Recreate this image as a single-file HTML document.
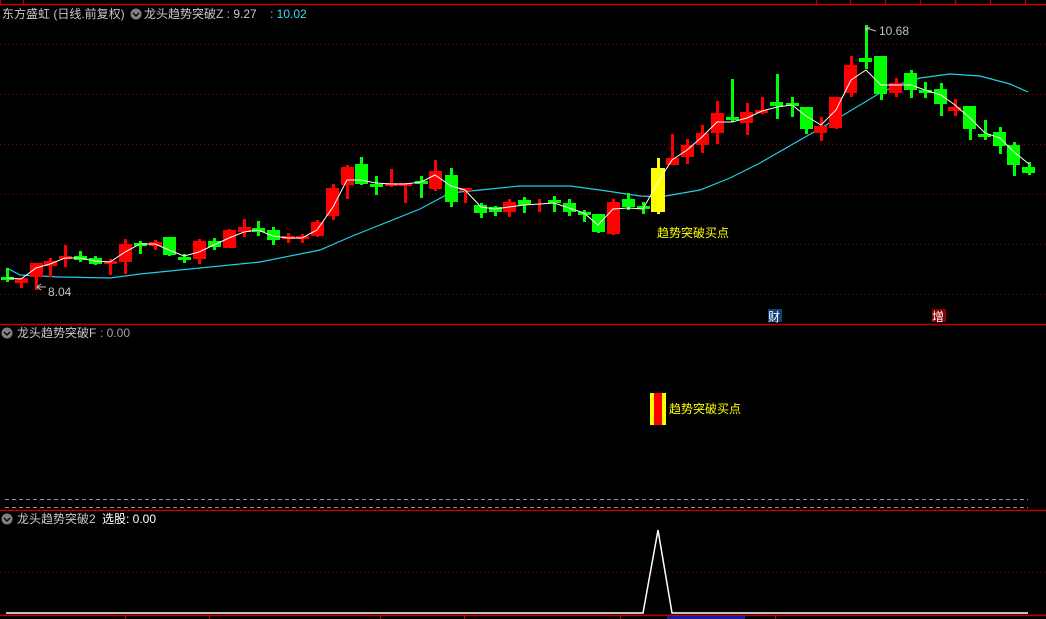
<!DOCTYPE html>
<html><head><meta charset="utf-8"><style>
html,body{margin:0;padding:0;background:#000;width:1046px;height:619px;overflow:hidden}
svg{display:block}
text{font-family:"Liberation Sans","Noto Sans CJK SC",sans-serif;font-size:12px}
</style></head><body>
<svg width="1046" height="619" viewBox="0 0 1046 619" xmlns="http://www.w3.org/2000/svg">
<rect width="1046" height="619" fill="#000"/>
<!-- top border -->
<line x1="0" y1="4.5" x2="1046" y2="4.5" stroke="#c00000" stroke-width="1.5"/>
<g stroke="#c00000" stroke-width="1.2">
<line x1="0.5" y1="0" x2="0.5" y2="4"/><line x1="23.5" y1="0" x2="23.5" y2="4"/>
<line x1="816.5" y1="0" x2="816.5" y2="4"/><line x1="850.5" y1="0" x2="850.5" y2="4"/><line x1="885.5" y1="0" x2="885.5" y2="4"/><line x1="920.5" y1="0" x2="920.5" y2="4"/><line x1="955.5" y1="0" x2="955.5" y2="4"/><line x1="990.5" y1="0" x2="990.5" y2="4"/><line x1="1025.5" y1="0" x2="1025.5" y2="4"/>
</g>
<!-- grid -->
<g stroke="#8a0000" stroke-width="1" stroke-dasharray="1,3">
<line x1="0" y1="44.5" x2="1046" y2="44.5"/><line x1="0" y1="94.5" x2="1046" y2="94.5"/><line x1="0" y1="144.5" x2="1046" y2="144.5"/><line x1="0" y1="194.5" x2="1046" y2="194.5"/><line x1="0" y1="244.5" x2="1046" y2="244.5"/><line x1="0" y1="294.5" x2="1046" y2="294.5"/>
<line x1="0" y1="572.5" x2="1046" y2="572.5"/>
</g>
<!-- header -->
<text x="2" y="18" fill="#c8c8c8">东方盛虹 (日线.前复权)</text>
<circle cx="136" cy="14" r="5.5" fill="#808080"/><path d="M133 13 L136 16 L139 13" stroke="#000" stroke-width="1.3" fill="none"/>
<text x="144" y="18" fill="#c8c8c8">龙头趋势突破Z : 9.27</text>
<text x="270" y="18" fill="#30e0f0">: 10.02</text>
<!-- cyan MA -->
<polyline fill="none" stroke="#20d0e8" stroke-width="1.2" points="7,268 20,275 60,277 110,278 140,274 200,268 260,262 320,250 350,237 380,225 420,209 450,193 480,190 520,186 570,186 600,190 640,196 660,197 700,190 730,178 760,163 800,140 840,117 880,93 900,84 920,78 950,74 980,76 1010,84 1028,92"/>
<!-- candles -->
<g id="c">
<g fill="#00ff00">
<rect x="6" y="268" width="3" height="14"/><rect x="1" y="277" width="13" height="3"/>
<rect x="79" y="251" width="3" height="11"/><rect x="74" y="256" width="13" height="4"/>
<rect x="94" y="256" width="3" height="9"/><rect x="89" y="258" width="13" height="6"/>
<rect x="139" y="241" width="3" height="13"/><rect x="134" y="243" width="13" height="3"/>
<rect x="168" y="237" width="3" height="19"/><rect x="163" y="237" width="13" height="18"/>
<rect x="183" y="254" width="3" height="9"/><rect x="178" y="257" width="13" height="3"/>
<rect x="213" y="238" width="3" height="12"/><rect x="208" y="241" width="13" height="6"/>
<rect x="257" y="221" width="3" height="15"/><rect x="252" y="228" width="13" height="4"/>
<rect x="272" y="227" width="3" height="18"/><rect x="267" y="230" width="13" height="10"/>
<rect x="360" y="157" width="3" height="28"/><rect x="355" y="164" width="13" height="20"/>
<rect x="375" y="176" width="3" height="19"/><rect x="370" y="184" width="13" height="3"/>
<rect x="420" y="176" width="3" height="22"/><rect x="415" y="181" width="13" height="3"/>
<rect x="450" y="168" width="3" height="39"/><rect x="445" y="175" width="13" height="27"/>
<rect x="480" y="203" width="3" height="15"/><rect x="474" y="205" width="13" height="8"/>
<rect x="494" y="206" width="3" height="10"/><rect x="489" y="207" width="13" height="5"/>
<rect x="523" y="197" width="3" height="16"/><rect x="518" y="200" width="13" height="5"/>
<rect x="553" y="196" width="3" height="16"/><rect x="548" y="200" width="13" height="3"/>
<rect x="568" y="199" width="3" height="17"/><rect x="563" y="203" width="13" height="9"/>
<rect x="583" y="210" width="3" height="12"/><rect x="578" y="212" width="13" height="3"/>
<rect x="597" y="214" width="3" height="19"/><rect x="592" y="214" width="13" height="18"/>
<rect x="627" y="193" width="3" height="17"/><rect x="622" y="199" width="13" height="8"/>
<rect x="642" y="202" width="3" height="12"/><rect x="637" y="206" width="13" height="3"/>
<rect x="731" y="79" width="3" height="43"/><rect x="726" y="117" width="13" height="3"/>
<rect x="776" y="74" width="3" height="45"/><rect x="770" y="102" width="13" height="4"/>
<rect x="791" y="97" width="3" height="20"/><rect x="786" y="103" width="13" height="3"/>
<rect x="805" y="107" width="3" height="27"/><rect x="800" y="107" width="13" height="22"/>
<rect x="865" y="25" width="3" height="44"/><rect x="859" y="58" width="13" height="4"/>
<rect x="880" y="56" width="3" height="44"/><rect x="874" y="56" width="13" height="38"/>
<rect x="910" y="70" width="3" height="28"/><rect x="904" y="73" width="13" height="17"/>
<rect x="924" y="82" width="3" height="16"/><rect x="919" y="90" width="13" height="3"/>
<rect x="940" y="83" width="3" height="33"/><rect x="934" y="89" width="13" height="15"/>
<rect x="969" y="106" width="3" height="34"/><rect x="963" y="106" width="13" height="23"/>
<rect x="984" y="120" width="3" height="20"/><rect x="978" y="134" width="13" height="3"/>
<rect x="999" y="127" width="3" height="27"/><rect x="993" y="132" width="13" height="14"/>
<rect x="1013" y="142" width="3" height="34"/><rect x="1007" y="145" width="13" height="20"/>
<rect x="1028" y="162" width="3" height="13"/><rect x="1022" y="167" width="13" height="6"/>
</g>
<g fill="#ff0000">
<rect x="20" y="278" width="3" height="10"/><rect x="15" y="278" width="13" height="5"/>
<rect x="35" y="263" width="3" height="27"/><rect x="30" y="263" width="13" height="14"/>
<rect x="49" y="258" width="3" height="19"/><rect x="44" y="261" width="13" height="5"/>
<rect x="64" y="245" width="3" height="22"/><rect x="59" y="256" width="13" height="3"/>
<rect x="109" y="259" width="3" height="16"/><rect x="104" y="261" width="13" height="3"/>
<rect x="124" y="239" width="3" height="35"/><rect x="119" y="244" width="13" height="18"/>
<rect x="154" y="240" width="3" height="10"/><rect x="149" y="242" width="13" height="4"/>
<rect x="198" y="239" width="3" height="25"/><rect x="193" y="241" width="13" height="18"/>
<rect x="228" y="229" width="3" height="19"/><rect x="223" y="230" width="13" height="18"/>
<rect x="243" y="219" width="3" height="18"/><rect x="238" y="227" width="13" height="5"/>
<rect x="287" y="233" width="3" height="10"/><rect x="282" y="236" width="13" height="3"/>
<rect x="301" y="234" width="3" height="9"/><rect x="296" y="236" width="13" height="3"/>
<rect x="316" y="220" width="3" height="17"/><rect x="311" y="222" width="13" height="14"/>
<rect x="332" y="184" width="3" height="36"/><rect x="326" y="188" width="13" height="28"/>
<rect x="346" y="165" width="3" height="34"/><rect x="341" y="167" width="13" height="18"/>
<rect x="390" y="169" width="3" height="18"/><rect x="385" y="183" width="13" height="3"/>
<rect x="404" y="183" width="3" height="20"/><rect x="399" y="183" width="13" height="3"/>
<rect x="434" y="160" width="3" height="31"/><rect x="429" y="171" width="13" height="18"/>
<rect x="464" y="188" width="3" height="15"/><rect x="459" y="188" width="13" height="3"/>
<rect x="508" y="199" width="3" height="18"/><rect x="503" y="202" width="13" height="10"/>
<rect x="538" y="199" width="3" height="13"/>
<rect x="612" y="199" width="3" height="36"/><rect x="607" y="202" width="13" height="32"/>
<rect x="671" y="134" width="3" height="31"/><rect x="666" y="158" width="13" height="7"/>
<rect x="686" y="139" width="3" height="25"/><rect x="681" y="145" width="13" height="12"/>
<rect x="701" y="125" width="3" height="28"/><rect x="696" y="133" width="13" height="12"/>
<rect x="716" y="101" width="3" height="43"/><rect x="711" y="113" width="13" height="20"/>
<rect x="746" y="103" width="3" height="32"/><rect x="740" y="112" width="13" height="11"/>
<rect x="761" y="97" width="3" height="17"/><rect x="755" y="110" width="13" height="3"/>
<rect x="820" y="117" width="3" height="24"/><rect x="814" y="126" width="13" height="7"/>
<rect x="835" y="97" width="3" height="32"/><rect x="829" y="97" width="13" height="31"/>
<rect x="850" y="56" width="3" height="41"/><rect x="844" y="65" width="13" height="28"/>
<rect x="895" y="78" width="3" height="19"/><rect x="889" y="83" width="13" height="10"/>
<rect x="954" y="99" width="3" height="17"/><rect x="948" y="107" width="13" height="4"/>
</g>
<rect x="657" y="158" width="3" height="56" fill="#ffff00"/><rect x="651" y="168" width="14" height="44" fill="#ffff00"/>
</g>
<!-- white MA -->
<polyline fill="none" stroke="#ffffff" stroke-width="1" points="7,278 21,279 36,268 50,264 65,258 80,258 95,261 110,262 125,252 140,244 155,244 169,250 184,256 199,252 214,245 229,238 244,232 258,230 273,236 288,238 302,238 317,230 333,207 347,180 361,180 376,183 391,184 405,184 421,182 435,175 451,186 465,190 481,207 495,209 509,207 524,205 540,204 554,203 569,208 584,213 598,225 613,209 628,208 643,209 658,182 672,160 687,150 702,137 717,122 732,122 747,118 762,111 777,107 792,105 806,116 821,125 836,110 851,80 866,70 881,85 896,85 911,85 925,90 941,95 955,105 970,118 985,133 1000,138 1014,152 1029,164"/>
<!-- labels -->
<path d="M41 290 L37 287 L41 284 M37 287 L46 287" stroke="#c0c0c0" fill="none"/>
<text x="48" y="296" fill="#c0c0c0">8.04</text>
<path d="M870 27 L866 30 M866 27 L866 31 M866 28 L876 31" stroke="#c0c0c0" fill="none"/>
<text x="879" y="35" fill="#c0c0c0">10.68</text>
<text x="657" y="237" fill="#ffff00">趋势突破买点</text>
<rect x="768" y="309" width="14" height="13" fill="#103f7a"/><text x="768" y="321" fill="#fff">财</text>
<rect x="932" y="309" width="14" height="13" fill="#8a0000"/><text x="932" y="321" fill="#fff">增</text>
<!-- panel 2 -->
<line x1="0" y1="324.5" x2="1046" y2="324.5" stroke="#c00000" stroke-width="1.5"/>
<circle cx="7" cy="333" r="5.5" fill="#808080"/><path d="M4 332 L7 335 L10 332" stroke="#000" stroke-width="1.3" fill="none"/>
<text x="17" y="337" fill="#c8c8c8">龙头趋势突破F</text><text x="100" y="337" fill="#a0a0a0">: 0.00</text>
<rect x="650" y="393" width="16" height="32" fill="#ffff00"/><rect x="654" y="393" width="8" height="32" fill="#ff0000"/>
<text x="669" y="413" fill="#ffff00">趋势突破买点</text>
<g stroke="#909090" stroke-dasharray="4,3"><line x1="5" y1="499.5" x2="1028" y2="499.5"/><line x1="5" y1="507.5" x2="1028" y2="507.5"/></g>
<!-- panel 3 -->
<line x1="0" y1="510.5" x2="1046" y2="510.5" stroke="#c00000" stroke-width="1.5"/>
<circle cx="7" cy="519" r="5.5" fill="#808080"/><path d="M4 518 L7 521 L10 518" stroke="#000" stroke-width="1.3" fill="none"/>
<text x="17" y="523" fill="#c8c8c8">龙头趋势突破2</text><text x="102" y="523" fill="#ffffff">选股: 0.00</text>
<polyline fill="none" stroke="#ffffff" stroke-width="1.5" points="6,613 643,613 658,530 672,613 1028,613"/>
<line x1="0" y1="615.5" x2="1046" y2="615.5" stroke="#c00000" stroke-width="1.5"/>
<g stroke="#c00000"><line x1="125.5" y1="615" x2="125.5" y2="619"/><line x1="209.5" y1="615" x2="209.5" y2="619"/><line x1="380.5" y1="615" x2="380.5" y2="619"/><line x1="464.5" y1="615" x2="464.5" y2="619"/><line x1="620.5" y1="615" x2="620.5" y2="619"/><line x1="775.5" y1="615" x2="775.5" y2="619"/></g>
<rect x="667" y="616" width="78" height="3" fill="#1a1aa0"/>
</svg>
</body></html>
